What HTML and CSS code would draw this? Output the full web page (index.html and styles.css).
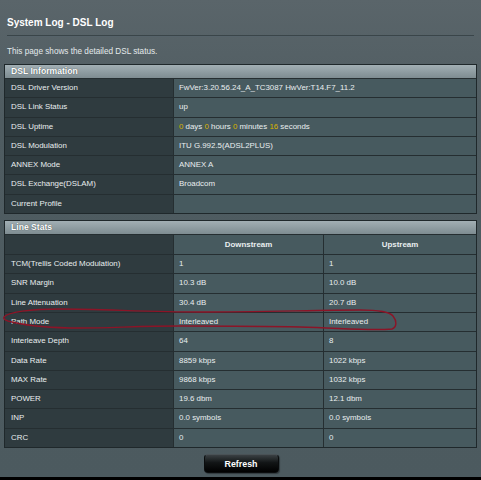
FILE: index.html
```html
<!DOCTYPE html>
<html>
<head>
<meta charset="utf-8">
<link rel="stylesheet" href="styles.css">
</head>
<body>
<div class="page">
  <h1 class="title">System Log - DSL Log</h1>
  <div class="sep"></div>
  <p class="desc">This page shows the detailed DSL status.</p>

  <div class="tbl">
    <div class="thead">DSL Information</div>
    <div class="row two"><div class="lab">DSL Driver Version</div><div class="val">FwVer:3.20.56.24_A_TC3087 HwVer:T14.F7_11.2</div></div>
    <div class="row two"><div class="lab">DSL Link Status</div><div class="val">up</div></div>
    <div class="row two"><div class="lab">DSL Uptime</div><div class="val"><span class="num">0</span> days <span class="num">0</span> hours <span class="num">0</span> minutes <span class="num">16</span> seconds</div></div>
    <div class="row two"><div class="lab">DSL Modulation</div><div class="val">ITU G.992.5(ADSL2PLUS)</div></div>
    <div class="row two"><div class="lab">ANNEX Mode</div><div class="val">ANNEX A</div></div>
    <div class="row two"><div class="lab">DSL Exchange(DSLAM)</div><div class="val">Broadcom</div></div>
    <div class="row two last"><div class="lab">Current Profile</div><div class="val"></div></div>
  </div>

  <div class="tbl second">
    <div class="thead">Line Stats</div>
    <div class="row three colhead"><div class="lab"></div><div class="val mid ch">Downstream</div><div class="val ch">Upstream</div></div>
    <div class="row three"><div class="lab">TCM(Trellis Coded Modulation)</div><div class="val mid">1</div><div class="val">1</div></div>
    <div class="row three"><div class="lab">SNR Margin</div><div class="val mid">10.3 dB</div><div class="val">10.0 dB</div></div>
    <div class="row three"><div class="lab">Line Attenuation</div><div class="val mid">30.4 dB</div><div class="val">20.7 dB</div></div>
    <div class="row three"><div class="lab">Path Mode</div><div class="val mid">Interleaved</div><div class="val">Interleaved</div></div>
    <div class="row three"><div class="lab">Interleave Depth</div><div class="val mid">64</div><div class="val">8</div></div>
    <div class="row three"><div class="lab">Data Rate</div><div class="val mid">8859 kbps</div><div class="val">1022 kbps</div></div>
    <div class="row three"><div class="lab">MAX Rate</div><div class="val mid">9868 kbps</div><div class="val">1032 kbps</div></div>
    <div class="row three"><div class="lab">POWER</div><div class="val mid">19.6 dbm</div><div class="val">12.1 dbm</div></div>
    <div class="row three"><div class="lab">INP</div><div class="val mid">0.0 symbols</div><div class="val">0.0 symbols</div></div>
    <div class="row three last"><div class="lab">CRC</div><div class="val mid">0</div><div class="val">0</div></div>
  </div>

  <div class="actions"><button class="btn">Refresh</button></div>
</div>
<div class="bottom"></div>

<svg class="mark" width="481" height="480" viewBox="0 0 481 480">
  <path d="M4,317 C8,312 30,309 60,309 C100,309 150,312 200,312 C260,312 320,310 360,310 C380,310 390,312 393,316 C397,321 397,327 392,329 C370,331 340,328 300,327 C260,326 220,326 180,326 C140,326 110,328 80,328 C50,328 25,325 12,322 C6,321 3,319 4,317 Z" fill="none" stroke="#8c1427" stroke-width="1.4"/>
</svg>
</body>
</html>
```

FILE: styles.css
```css
html, body {
  margin: 0;
  padding: 0;
}
body {
  width: 481px;
  height: 480px;
  position: relative;
  overflow: hidden;
  background: linear-gradient(#5a656a 0px, #4f5c61 120px, #4c5a5f 480px);
  font-family: "Liberation Sans", Arial, sans-serif;
  color: #e9eeef;
  display: flex;
  flex-direction: column;
}
.page {
  flex: 1;
  padding: 0 4px;
}
.title {
  margin: 0;
  padding: 17px 3px 0;
  font-size: 10px;
  line-height: 12px;
  font-weight: bold;
  color: #ffffff;
}
.sep {
  margin: 6px 3px 0;
  height: 1px;
  background: #3a4549;
  border-bottom: 1px solid #56636a;
}
.desc {
  margin: 9px 0 0;
  padding-left: 3px;
  font-size: 8.2px;
  line-height: 12px;
  color: #e4eaec;
}
.tbl {
  margin-top: 6px;
  border: 1px solid #1f282b;
  background: #475a5f;
}
.tbl.second {
  margin-top: 6px;
}
.thead {
  height: 13px;
  line-height: 13px;
  padding-left: 6px;
  font-size: 8.6px;
  font-weight: bold;
  color: #ffffff;
  text-shadow: 0 0 1px #2d383c;
  background: linear-gradient(#a2afb4, #8c9a9f 60%, #7e8c91);
}
.row {
  display: grid;
  height: 19.3px;
  box-sizing: border-box;
  border-top: 1px solid #252e31;
  font-size: 7.9px;
  line-height: 18.3px;
}
.row.two {
  grid-template-columns: 169px 1fr;
}
.row.three {
  grid-template-columns: 169px 150px 1fr;
}
.row.colhead {
  height: 20px;
  line-height: 19px;
}
.lab {
  background: #2f3b3f;
  border-right: 1px solid #252e31;
  padding-left: 6px;
  white-space: nowrap;
}
.val {
  background: #475a5f;
  padding-left: 5px;
  white-space: nowrap;
}
.val.mid {
  border-right: 1px solid #252e31;
}
.val.ch {
  text-align: center;
  padding-left: 0;
  font-weight: bold;
}
.num {
  color: #d9b400;
}
.actions {
  display: flex;
  justify-content: center;
  margin-top: 6px;
}
.btn {
  width: 75px;
  height: 19px;
  margin-left: 1px;
  border: 1px solid #0a0c0d;
  border-top-color: #4a5256;
  border-radius: 4px;
  background: linear-gradient(#3a4043, #121516 45%, #000000);
  color: #ffffff;
  font-family: "Liberation Sans", Arial, sans-serif;
  font-size: 8.9px;
  font-weight: bold;
  padding: 0;
  box-shadow: 1px 1px 1px rgba(0,0,0,0.35);
}
.bottom {
  height: 3px;
  background: #000000;
}
.mark {
  position: absolute;
  left: 0;
  top: 0;
  pointer-events: none;
}
```
